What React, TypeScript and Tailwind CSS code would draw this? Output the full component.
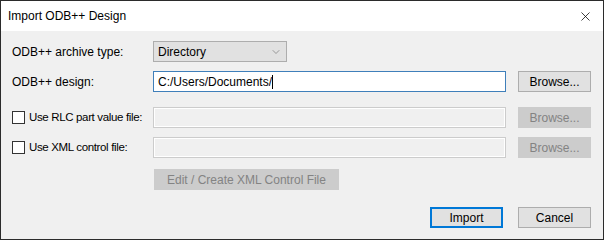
import { X, ChevronDown } from "lucide-react";

const font = { fontFamily: '"Liberation Sans", Arial, sans-serif' };

function Btn({ label, disabled, primary, className = "" }: { label: string; disabled?: boolean; primary?: boolean; className?: string }) {
    const base = "h-[21px] w-[73px] flex items-center justify-center text-[12px] leading-none whitespace-nowrap";
    if (disabled) {
        return <div className={`${base} bg-[#cccccc] border border-[#cccccc] text-[#838383] ${className}`}>{label}</div>;
    }
    if (primary) {
        return <div className={`${base} bg-[#e1e1e1] border-2 border-[#0078d7] text-black ${className}`}>{label}</div>;
    }
    return <div className={`${base} bg-[#e1e1e1] border border-[#adadad] text-black ${className}`}>{label}</div>;
}

function Check({ label }: { label: string }) {
    return (
        <div className="w-[141px] flex items-center whitespace-nowrap">
            <div className="w-[13px] h-[13px] border border-[#333333] bg-white shrink-0" />
            <span className="ml-[4px] text-[11.5px] tracking-[-0.35px]">{label}</span>
        </div>
    );
}

export default function App() {
    return (
        <div style={font} className="w-[604px] h-[240px] border border-[#2b2b2b] bg-[#f0f0f0] flex flex-col text-[12px] text-black">
            {/* title bar */}
            <div className="h-[30px] bg-white flex items-center pl-[7px] pr-[10px]">
                <span className="text-[12px]">Import ODB++ Design</span>
                <X className="ml-auto size-[15px] text-black" strokeWidth={1.2} />
            </div>

            <div className="flex flex-col pl-[11px] pr-[12px]">
                <div className="mt-[10px] h-[21px] flex items-center">
                    <div className="w-[141px] whitespace-nowrap">ODB++ archive type:</div>
                    <div className="w-[134px] h-[21px] border border-[#adadad] bg-[#e1e1e1] flex items-center pl-[4px] pr-[4px]">
                        <span>Directory</span>
                        <ChevronDown className="ml-auto size-[12px] text-[#666]" strokeWidth={1.2} />
                    </div>
                </div>

                <div className="mt-[9px] h-[21px] flex items-center">
                    <div className="w-[141px] whitespace-nowrap">ODB++ design:</div>
                    <div className="w-[353px] h-[21px] border border-[#3f7fba] bg-white flex items-center pl-[4px]">
                        <span>C:/Users/Documents/</span>
                        <span className="w-px h-[14px] bg-black" />
                    </div>
                    <Btn label="Browse..." className="ml-auto" />
                </div>

                <div className="mt-[15px] h-[21px] flex items-center">
                    <Check label="Use RLC part value file:" />
                    <div className="w-[353px] h-[21px] border border-[#cccccc] bg-[#f0f0f0] shadow-[inset_0_0_0_1px_#ffffff]" />
                    <Btn label="Browse..." disabled className="ml-auto" />
                </div>

                <div className="mt-[9px] h-[21px] flex items-center">
                    <Check label="Use XML control file:" />
                    <div className="w-[353px] h-[21px] border border-[#cccccc] bg-[#f0f0f0] shadow-[inset_0_0_0_1px_#ffffff]" />
                    <Btn label="Browse..." disabled className="ml-auto" />
                </div>

                <div className="mt-[11px] flex">
                    <Btn label="Edit / Create XML Control File" disabled className="ml-[142px] !w-[185px]" />
                </div>

                <div className="mt-[17px] flex justify-end gap-[15px]">
                    <Btn label="Import" primary />
                    <Btn label="Cancel" />
                </div>
            </div>
        </div>
    );
}
